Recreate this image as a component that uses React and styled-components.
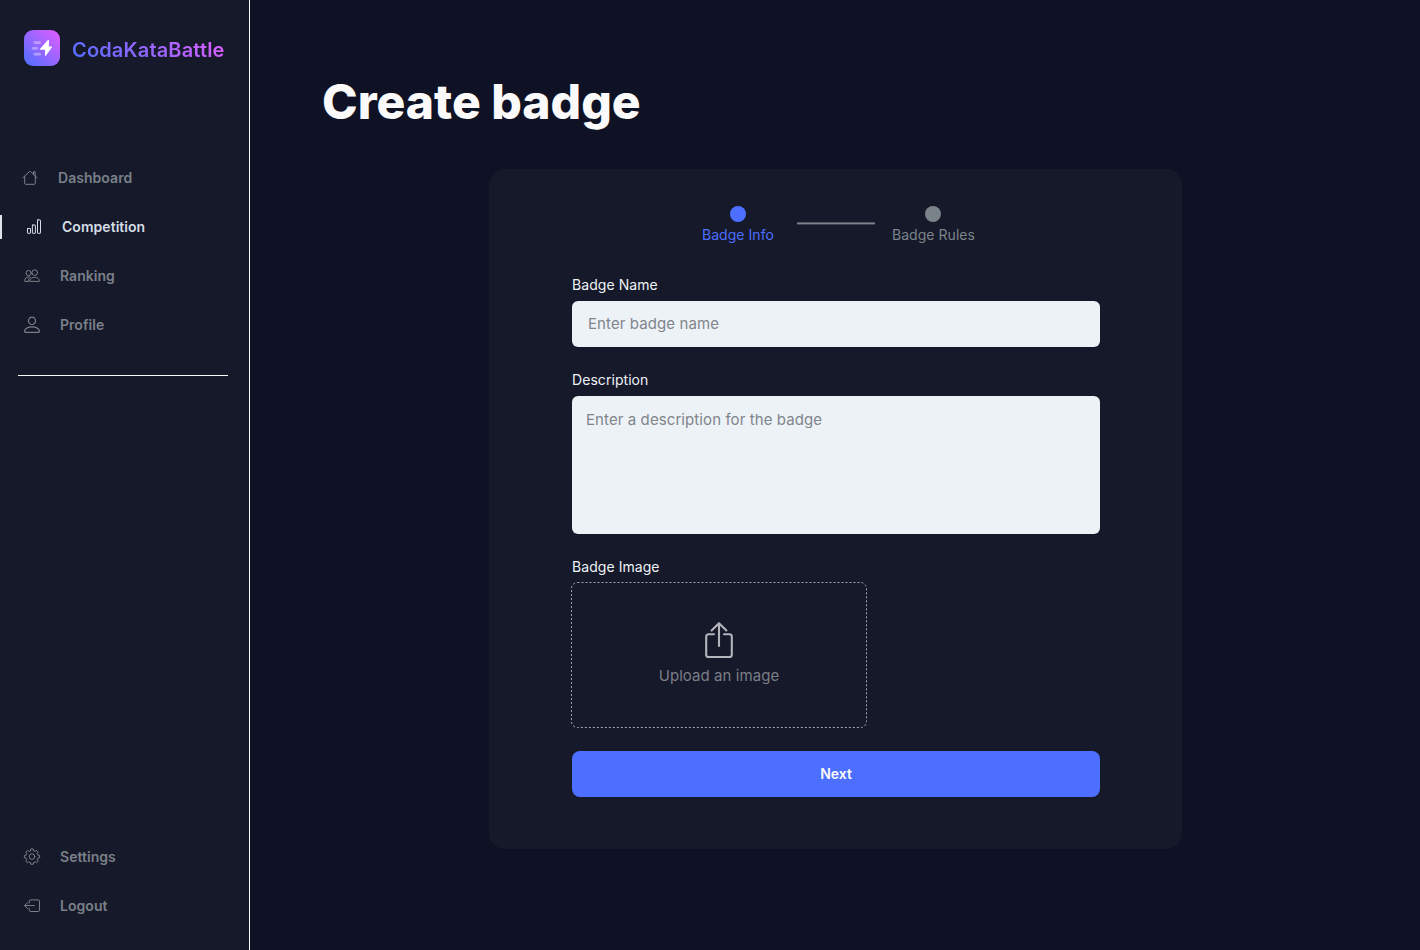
import React from "react";
import styled, { createGlobalStyle } from "styled-components";

const GlobalStyle = createGlobalStyle`
  *, *::before, *::after { box-sizing: border-box; }
  body { margin: 0; background: #0f1224; font-family: Inter, "Liberation Sans", sans-serif; }
`;

const Page = styled.div`
  display: flex;
  height: 950px;
  overflow: hidden;
  background: #0f1224;
`;

const Sidebar = styled.aside`
  display: flex;
  flex-direction: column;
  width: 250px;
  flex: none;
  border-right: 1px solid #fafafa;
  background: #16192a;
`;

const Brand = styled.div`
  display: flex;
  align-items: center;
  gap: 12px;
  padding: 30px 0 0 24px;
`;

const BrandName = styled.span`
  padding-top: 3px;
  font-size: 20px;
  line-height: 24px;
  font-weight: 600;
  letter-spacing: 0.16px;
  white-space: nowrap;
  color: transparent;
  background: linear-gradient(45deg, #4c6fff 0%, #e45dff 100%);
  background-clip: text;
`;

const Nav = styled.nav`
  display: flex;
  flex-direction: column;
  gap: 25px;
  margin-top: ${(p) => p.$top};
  margin-bottom: ${(p) => p.$bottom || 0};
`;

const NavItem = styled.a`
  display: flex;
  align-items: center;
  gap: 20px;
  height: 24px;
  padding-left: ${(p) => p.$indent || 24}px;
  border-left: ${(p) => (p.$active ? "2px solid #dce4ec" : "0")};
  color: ${(p) => (p.$active ? "#d5dde6" : "#7a8088")};
  font-size: 14px;
  font-weight: 600;
  line-height: 24px;
  letter-spacing: 0.04px;
`;

const NavIcon = styled.svg`
  width: 16px;
  height: 18px;
  flex: none;
  overflow: visible;
  fill: none;
  stroke: currentColor;
  stroke-width: ${(p) => p.$weight || 1};
  stroke-linecap: round;
  stroke-linejoin: round;
`;

const Divider = styled.hr`
  width: 210px;
  height: 1px;
  margin: 38px 0 0 18px;
  border: 0;
  background: #fafafa;
`;

const Main = styled.main`
  flex: 1;
  padding: 73px 0 0 72px;
`;

const Title = styled.h1`
  margin: 0;
  font-size: 48px;
  line-height: 58px;
  font-weight: 800;
  color: #fafafa;
`;

const Card = styled.section`
  width: 693px;
  height: 680px;
  margin: 38px 0 0 167px;
  padding: 37px 82px 0 83px;
  border-radius: 16px;
  background: #16192a;
`;

const Steps = styled.div`
  display: flex;
  justify-content: center;
  margin-left: 5px;
`;

const Step = styled.div`
  display: flex;
  flex-direction: column;
  align-items: center;
  gap: 4px;
  color: ${(p) => (p.$active ? "#4c6fff" : "#7b838a")};
  font-size: 14px;
  line-height: 18px;
  letter-spacing: 0.05px;
`;

const StepDot = styled.span`
  width: 16px;
  height: 16px;
  border-radius: 50%;
  background: currentColor;
`;

const StepLine = styled.span`
  width: 78px;
  height: 2px;
  margin: 16px 17px 0 23px;
  background: #7b838a;
  transform: translateY(0.4px);
`;

const Field = styled.div`
  display: flex;
  flex-direction: column;
  margin-top: ${(p) => p.$top}px;
`;

const Label = styled.label`
  margin-bottom: 7px;
  font-size: 14px;
  line-height: 18px;
  letter-spacing: 0.06px;
  color: #edf2f7;
`;

const control = `
  width: 100%;
  border: 0;
  border-radius: 6px;
  outline: 0;
  resize: none;
  background: #edf2f7;
  font-family: inherit;
  font-size: 15px;
  line-height: 16px;
  letter-spacing: 0.09px;
  &::placeholder { color: #7f858b; opacity: 1; line-height: 16px; overflow: hidden; }
`;

const Input = styled.input`
  ${control}
  height: 46px;
  padding: 0 16px 2px;
`;

const TextArea = styled.textarea`
  ${control}
  display: block;
  height: 138px;
  padding: 16px 14px;
`;

const Upload = styled.div`
  position: relative;
  display: flex;
  flex-direction: column;
  align-items: center;
  width: 296px;
  height: 146px;
  margin: -1px 0 0 -1px;
  padding-top: 39px;
  color: #7b7e87;
  font-size: 15px;
  line-height: 20px;
  letter-spacing: 0.07px;
`;

const DashedOutline = styled.svg`
  position: absolute;
  inset: 0;
  width: 100%;
  height: 100%;
  fill: none;
  stroke: #a3a5ad;
  stroke-dasharray: 2 2;
`;

const UploadIcon = styled.svg`
  width: 30px;
  height: 38px;
  margin-bottom: 7px;
  fill: none;
  stroke: #b4b5bc;
  stroke-width: 2.1;
  stroke-linecap: round;
  stroke-linejoin: round;
`;

const NextButton = styled.button`
  width: 100%;
  height: 46px;
  margin-top: 23px;
  padding: 0 0 2px;
  border: 0;
  border-radius: 8px;
  background: #4c6fff;
  color: #fafafa;
  font-family: inherit;
  font-size: 14px;
  font-weight: 600;
`;

const Logo = () => (
  <svg width="36" height="36" viewBox="0 0 36 36">
    <defs>
      <linearGradient id="brand" x1="0" y1="1" x2="1" y2="0">
        <stop offset="0" stopColor="#4c6fff" />
        <stop offset="1" stopColor="#e45dff" />
      </linearGradient>
    </defs>
    <rect width="36" height="36" rx="9" fill="url(#brand)" />
    <g stroke="#fff" strokeOpacity=".35" strokeWidth="2.7" strokeLinecap="round">
      <path d="M10.8 12.6H15.8M8.9 18.4H12.6M10.8 24.2H15.8" />
    </g>
    <path
      d="M23.9 10.1 15.9 18.9Q15.5 19.6 16.3 19.7H21V25.3Q21.2 26.4 22 25.5L28 17.3Q28.4 16.5 27.6 16.4H24.9L25 10.7Q24.8 9.5 23.9 10.1Z"
      fill="#fff"
    />
  </svg>
);

const gearPath = (() => {
  const points = [];
  for (let i = 0; i < 8; i++) {
    [[-14, 6.1], [-9, 7.7], [9, 7.7], [14, 6.1]].forEach(([offset, r]) => {
      const a = ((i * 45 + offset) * Math.PI) / 180;
      points.push(`${(8 + r * Math.sin(a)).toFixed(2)} ${(8.6 - r * Math.cos(a)).toFixed(2)}`);
    });
  }
  return `M${points.join("L")}Z`;
})();

const HomeIcon = () => (
  <NavIcon viewBox="0 0 16 18">
    <path d="M.8 8.9 7.6 2.4Q8 2 8.4 2.4L15.2 8.9M2.7 7.4V14.3Q2.7 15.3 3.7 15.3H12.3Q13.3 15.3 13.3 14.3V7.4M11.5 5V2.7H13.1V6.6" />
  </NavIcon>
);

const BarsIcon = () => (
  <NavIcon viewBox="0 0 16 18" $weight={1}>
    <rect x="1.5" y="10.5" width="3" height="4.8" rx=".4" />
    <rect x="6.4" y="7" width="3" height="8.3" rx=".4" />
    <rect x="11.5" y="1.9" width="3" height="13.4" rx=".4" />
  </NavIcon>
);

const PeopleIcon = () => (
  <NavIcon viewBox="0 0 16 18">
    <circle cx="4.6" cy="6" r="2.6" />
    <circle cx="10.8" cy="5.6" r="2.8" />
    <path d="M6.2 14.4H15Q15.7 14.4 15.5 13.7C14.8 11.5 13.2 10.3 10.8 10.3S6.3 11.5 5.8 13.7Q5.6 14.4 6.2 14.4ZM4 14.4H.9Q.4 14.4 .5 13.7C.9 11.2 2.4 9.9 4.6 9.9Q5.7 9.9 6.4 10.2M4 14.4Q4.1 12.6 5.2 11.3" />
  </NavIcon>
);

const PersonIcon = () => (
  <NavIcon viewBox="0 0 16 18" $weight={1.2}>
    <ellipse cx="8" cy="4.8" rx="3.5" ry="3.7" />
    <path d="M1.5 16.3H14.5Q15.6 16.2 15.4 15C14.7 12.4 11.8 10.9 8 10.9S1.3 12.4.6 15Q.4 16.2 1.5 16.3Z" />
  </NavIcon>
);

const GearIcon = () => (
  <NavIcon viewBox="0 0 16 18">
    <path d={gearPath} />
    <circle cx="8" cy="8.6" r="2.8" />
  </NavIcon>
);

const ExitIcon = () => (
  <NavIcon viewBox="0 0 16 18">
    <path d="M5.2 6V4.1Q5.2 2.9 6.4 2.9H14.3Q15.5 2.9 15.5 4.1V13.3Q15.5 14.5 14.3 14.5H6.4Q5.2 14.5 5.2 13.3V11.4M10.4 8.6H.7M3.5 5.8.6 8.6 3.5 11.4" />
  </NavIcon>
);

export default function App() {
  return (
    <Page>
      <GlobalStyle />
      <Sidebar>
        <Brand>
          <Logo />
          <BrandName>CodaKataBattle</BrandName>
        </Brand>
        <Nav $top="100px">
          <NavItem $indent={22}><HomeIcon />Dashboard</NavItem>
          <NavItem $active><BarsIcon />Competition</NavItem>
          <NavItem><PeopleIcon />Ranking</NavItem>
          <NavItem><PersonIcon />Profile</NavItem>
        </Nav>
        <Divider />
        <Nav $top="auto" $bottom="32px">
          <NavItem><GearIcon />Settings</NavItem>
          <NavItem><ExitIcon />Logout</NavItem>
        </Nav>
      </Sidebar>
      <Main>
        <Title>Create badge</Title>
        <Card>
          <Steps>
            <Step $active><StepDot />Badge Info</Step>
            <StepLine />
            <Step><StepDot />Badge Rules</Step>
          </Steps>
          <Field $top={32}>
            <Label htmlFor="name">Badge Name</Label>
            <Input id="name" placeholder="Enter badge name" />
          </Field>
          <Field $top={24}>
            <Label htmlFor="description">Description</Label>
            <TextArea id="description" placeholder="Enter a description for the badge" />
          </Field>
          <Field $top={24}>
            <Label>Badge Image</Label>
            <Upload>
              <DashedOutline>
                <rect x=".5" y=".5" width="295" height="145" rx="6" />
              </DashedOutline>
              <UploadIcon viewBox="0 0 30 38">
                <path d="M15 2.4V25M7.6 9.4 15 2.2 22.4 9.4M10 13.3H4.6Q2.2 13.3 2.2 15.7V33.7Q2.2 36 4.6 36H25.4Q27.8 36 27.8 33.7V15.7Q27.8 13.3 25.4 13.3H20" />
              </UploadIcon>
              Upload an image
            </Upload>
          </Field>
          <NextButton>Next</NextButton>
        </Card>
      </Main>
    </Page>
  );
}
